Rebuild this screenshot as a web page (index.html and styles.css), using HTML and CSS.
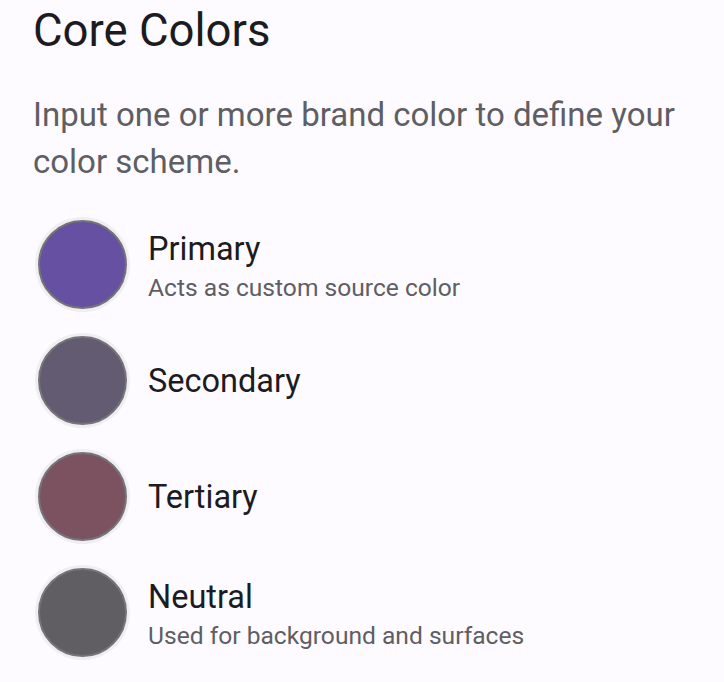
FILE: index.html
```html
<!DOCTYPE html>
<html>
<head>
<meta charset="utf-8">
<link rel="stylesheet" href="styles.css">
</head>
<body>
<main class="panel">
  <h1 class="title">Core Colors</h1>
  <p class="desc">Input one or more brand color to define your color scheme.</p>
  <ul class="list">
    <li class="item">
      <span class="swatch primary"></span>
      <div class="text">
        <div class="name">Primary</div>
        <div class="sub">Acts as custom source color</div>
      </div>
    </li>
    <li class="item">
      <span class="swatch secondary"></span>
      <div class="text">
        <div class="name">Secondary</div>
      </div>
    </li>
    <li class="item">
      <span class="swatch tertiary"></span>
      <div class="text">
        <div class="name">Tertiary</div>
      </div>
    </li>
    <li class="item">
      <span class="swatch neutral"></span>
      <div class="text">
        <div class="name">Neutral</div>
        <div class="sub">Used for background and surfaces</div>
      </div>
    </li>
  </ul>
</main>
</body>
</html>
```

FILE: styles.css
```css
html, body {
  margin: 0;
  padding: 0;
  background: #fdfbff;
}
body {
  font-family: Roboto, "Open Sans", sans-serif;
  width: 724px;
  height: 682px;
  overflow: hidden;
}
.panel {
  padding: 5px 32px 0 33px;
}
.title {
  margin: 0;
  font-size: 45.5px;
  font-weight: 400;
  line-height: 52px;
  color: #1c1b1f;
}
.desc {
  margin: 34px 0 0 0;
  font-size: 33px;
  line-height: 47px;
  color: #5f5e63;
}
.list {
  list-style: none;
  margin: 35px 0 0 0;
  padding: 0;
  display: flex;
  flex-direction: column;
  gap: 27px;
}
.item {
  display: flex;
  align-items: center;
  gap: 21px;
}
.swatch {
  flex: none;
  margin-left: 5px;
  width: 85px;
  height: 85px;
  border-radius: 50%;
  border: 2px solid #767479;
  box-shadow: 0 0 0 3px #efeef1;
}
.primary { background: #6650a2; }
.secondary { background: #625b71; }
.tertiary { background: #7d5260; }
.neutral { background: #605e62; }
.name {
  font-size: 32.5px;
  line-height: 46px;
  color: #1c1b1f;
}
.sub {
  font-size: 24.6px;
  line-height: 31px;
  color: #5f5e63;
}
```
